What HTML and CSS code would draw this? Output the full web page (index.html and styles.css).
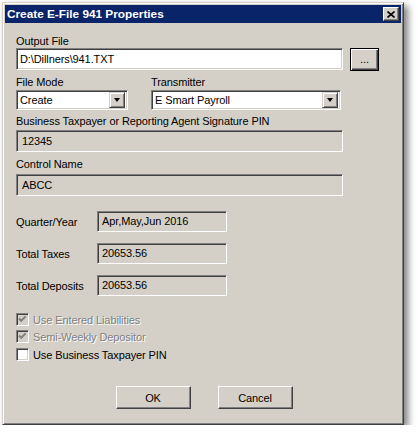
FILE: index.html
```html
<!DOCTYPE html>
<html lang="en">
<head>
  <meta charset="UTF-8">
  <title>Create E-File 941 Properties</title>
  <link rel="stylesheet" href="styles.css">
</head>
<body>
  <div class="window">
    <div class="titlebar">
      <span class="title">Create E-File 941 Properties</span>
      <div class="close">
        <svg width="8" height="7" viewBox="0 0 8 7"><path d="M0.5 0.5 L7.5 6.5 M7.5 0.5 L0.5 6.5" stroke="#000" stroke-width="1.6" fill="none"/></svg>
      </div>
    </div>

    <div class="content">
      <div class="label">Output File</div>
      <div class="file-row">
        <div class="field white full">D:\Dillners\941.TXT</div>
        <div class="btn default dots">...</div>
      </div>

      <div class="two-col">
        <div class="col">
          <div class="label">File Mode</div>
          <div class="combo mode">
            <span class="combo-text">Create</span>
            <span class="combo-btn"><span class="arrow"></span></span>
          </div>
        </div>
        <div class="col">
          <div class="label">Transmitter</div>
          <div class="combo transmitter">
            <span class="combo-text">E Smart Payroll</span>
            <span class="combo-btn"><span class="arrow"></span></span>
          </div>
        </div>
      </div>

      <div class="label pin-label">Business Taxpayer or Reporting Agent Signature PIN</div>
      <div class="field full">12345</div>

      <div class="label control-label">Control Name</div>
      <div class="field full">ABCC</div>

      <div class="totals">
        <div class="total-row">
          <span class="row-label">Quarter/Year</span>
          <div class="field small">Apr,May,Jun 2016</div>
        </div>
        <div class="total-row">
          <span class="row-label">Total Taxes</span>
          <div class="field small">20653.56</div>
        </div>
        <div class="total-row">
          <span class="row-label">Total Deposits</span>
          <div class="field small">20653.56</div>
        </div>
      </div>

      <div class="checks">
        <div class="check disabled">
          <span class="box"><svg width="9" height="9" viewBox="0 0 9 9"><path d="M1 3.5 L3.2 5.8 L7.6 1.4" stroke="#808080" stroke-width="2" fill="none"/></svg></span>
          <span>Use Entered Liabilities</span>
        </div>
        <div class="check disabled">
          <span class="box"><svg width="9" height="9" viewBox="0 0 9 9"><path d="M1 3.5 L3.2 5.8 L7.6 1.4" stroke="#808080" stroke-width="2" fill="none"/></svg></span>
          <span>Semi-Weekly Depositor</span>
        </div>
        <div class="check last">
          <span class="box white"></span>
          <span>Use Business Taxpayer PIN</span>
        </div>
      </div>

      <div class="buttons">
        <div class="btn action">OK</div>
        <div class="btn action">Cancel</div>
      </div>
    </div>
  </div>
</body>
</html>
```

FILE: styles.css
```css
body {
  margin: 0;
  background: #fff;
  font-family: "Liberation Sans", Arial, sans-serif;
  font-size: 11px;
  letter-spacing: -0.1px;
  color: #000;
}
.window {
  margin: 2px 0 0 2px;
  width: 402px;
  height: 423px;
  box-sizing: border-box;
  background: #d4d0c8;
  border: 1px solid;
  border-color: #d4d0c8 #404040 #404040 #d4d0c8;
  box-shadow: inset 1px 1px #fff, inset -1px -1px #808080, 4px 4px 7px rgba(0, 0, 0, 0.5);
  padding: 2px;
}
.titlebar {
  height: 18px;
  background: #0a246a;
  color: #fff;
  display: flex;
  align-items: center;
  justify-content: space-between;
  padding: 0 2px;
}
.title {
  font-weight: bold;
  font-size: 11.8px;
  letter-spacing: 0;
}
.close {
  width: 16px;
  height: 14px;
  box-sizing: border-box;
  background: #d4d0c8;
  border: 1px solid;
  border-color: #fff #404040 #404040 #fff;
  box-shadow: inset -1px -1px #808080;
  display: flex;
  align-items: center;
  justify-content: center;
}
.content {
  padding: 12px 0 0 11px;
}
.label {
  height: 13px;
  line-height: 13px;
}
.field {
  box-sizing: border-box;
  height: 22px;
  border: 1px solid;
  border-color: #808080 #fff #fff #808080;
  box-shadow: inset 1px 1px #404040, inset -1px -1px #d4d0c8;
  background: #d4d0c8;
  padding: 4px 5px;
  line-height: 13px;
  white-space: nowrap;
}
.field.white {
  background: #fff;
  padding: 4px 3px;
}
.field.full {
  width: 327px;
}
.file-row {
  display: flex;
  align-items: flex-start;
  gap: 7px;
}
.btn {
  box-sizing: border-box;
  background: #d4d0c8;
  border: 1px solid;
  border-color: #fff #404040 #404040 #fff;
  box-shadow: inset -1px -1px #808080;
  display: flex;
  align-items: center;
  justify-content: center;
}
.btn.default {
  border-color: #000;
  box-shadow: inset 1px 1px #fff, inset -1px -1px #404040, inset -2px -2px #808080;
}
.dots {
  width: 29px;
  height: 23px;
  padding-bottom: 2px;
}
.two-col {
  display: flex;
  gap: 23px;
  margin-top: 5px;
}
.two-col .label {
  margin-bottom: 1px;
}
.combo {
  box-sizing: border-box;
  height: 20px;
  border: 1px solid;
  border-color: #808080 #fff #fff #808080;
  box-shadow: inset 1px 1px #404040, inset -1px -1px #d4d0c8;
  background: #fff;
  padding: 2px;
  display: flex;
  align-items: center;
}
.combo.mode {
  width: 112px;
}
.combo.transmitter {
  width: 190px;
}
.combo-text {
  flex: 1;
  padding-left: 1px;
}
.combo-btn {
  width: 16px;
  height: 16px;
  box-sizing: border-box;
  background: #d4d0c8;
  border: 1px solid;
  border-color: #d4d0c8 #404040 #404040 #d4d0c8;
  box-shadow: inset 1px 1px #fff, inset -1px -1px #808080;
  display: flex;
  align-items: center;
  justify-content: center;
}
.arrow {
  width: 0;
  height: 0;
  border-left: 3.5px solid transparent;
  border-right: 3.5px solid transparent;
  border-top: 4px solid #000;
}
.pin-label {
  margin-top: 5px;
  margin-bottom: 2px;
}
.control-label {
  margin-top: 6px;
  margin-bottom: 3px;
}
.totals {
  margin-top: 15px;
  display: flex;
  flex-direction: column;
  gap: 11px;
}
.total-row {
  display: flex;
  align-items: flex-end;
}
.row-label {
  width: 81px;
  line-height: 13px;
  padding-bottom: 3px;
}
.field.small {
  width: 130px;
  height: 21px;
  padding: 3px 4px;
}
.checks {
  margin-top: 15px;
}
.check {
  display: flex;
  align-items: center;
  height: 17px;
  gap: 4px;
}
.check.last {
  margin-top: 1px;
}
.box {
  box-sizing: border-box;
  width: 13px;
  height: 13px;
  border: 1px solid;
  border-color: #808080 #fff #fff #808080;
  box-shadow: inset 1px 1px #404040, inset -1px -1px #d4d0c8;
  background: #d4d0c8;
  display: flex;
  align-items: center;
  justify-content: center;
}
.box.white {
  background: #fff;
}
.check.disabled {
  color: #808080;
  text-shadow: 1px 1px #fff;
}
.buttons {
  display: flex;
  justify-content: center;
  gap: 27px;
  margin-top: 23px;
  padding-right: 9px;
}
.btn.action {
  width: 75px;
  height: 23px;
}
```
